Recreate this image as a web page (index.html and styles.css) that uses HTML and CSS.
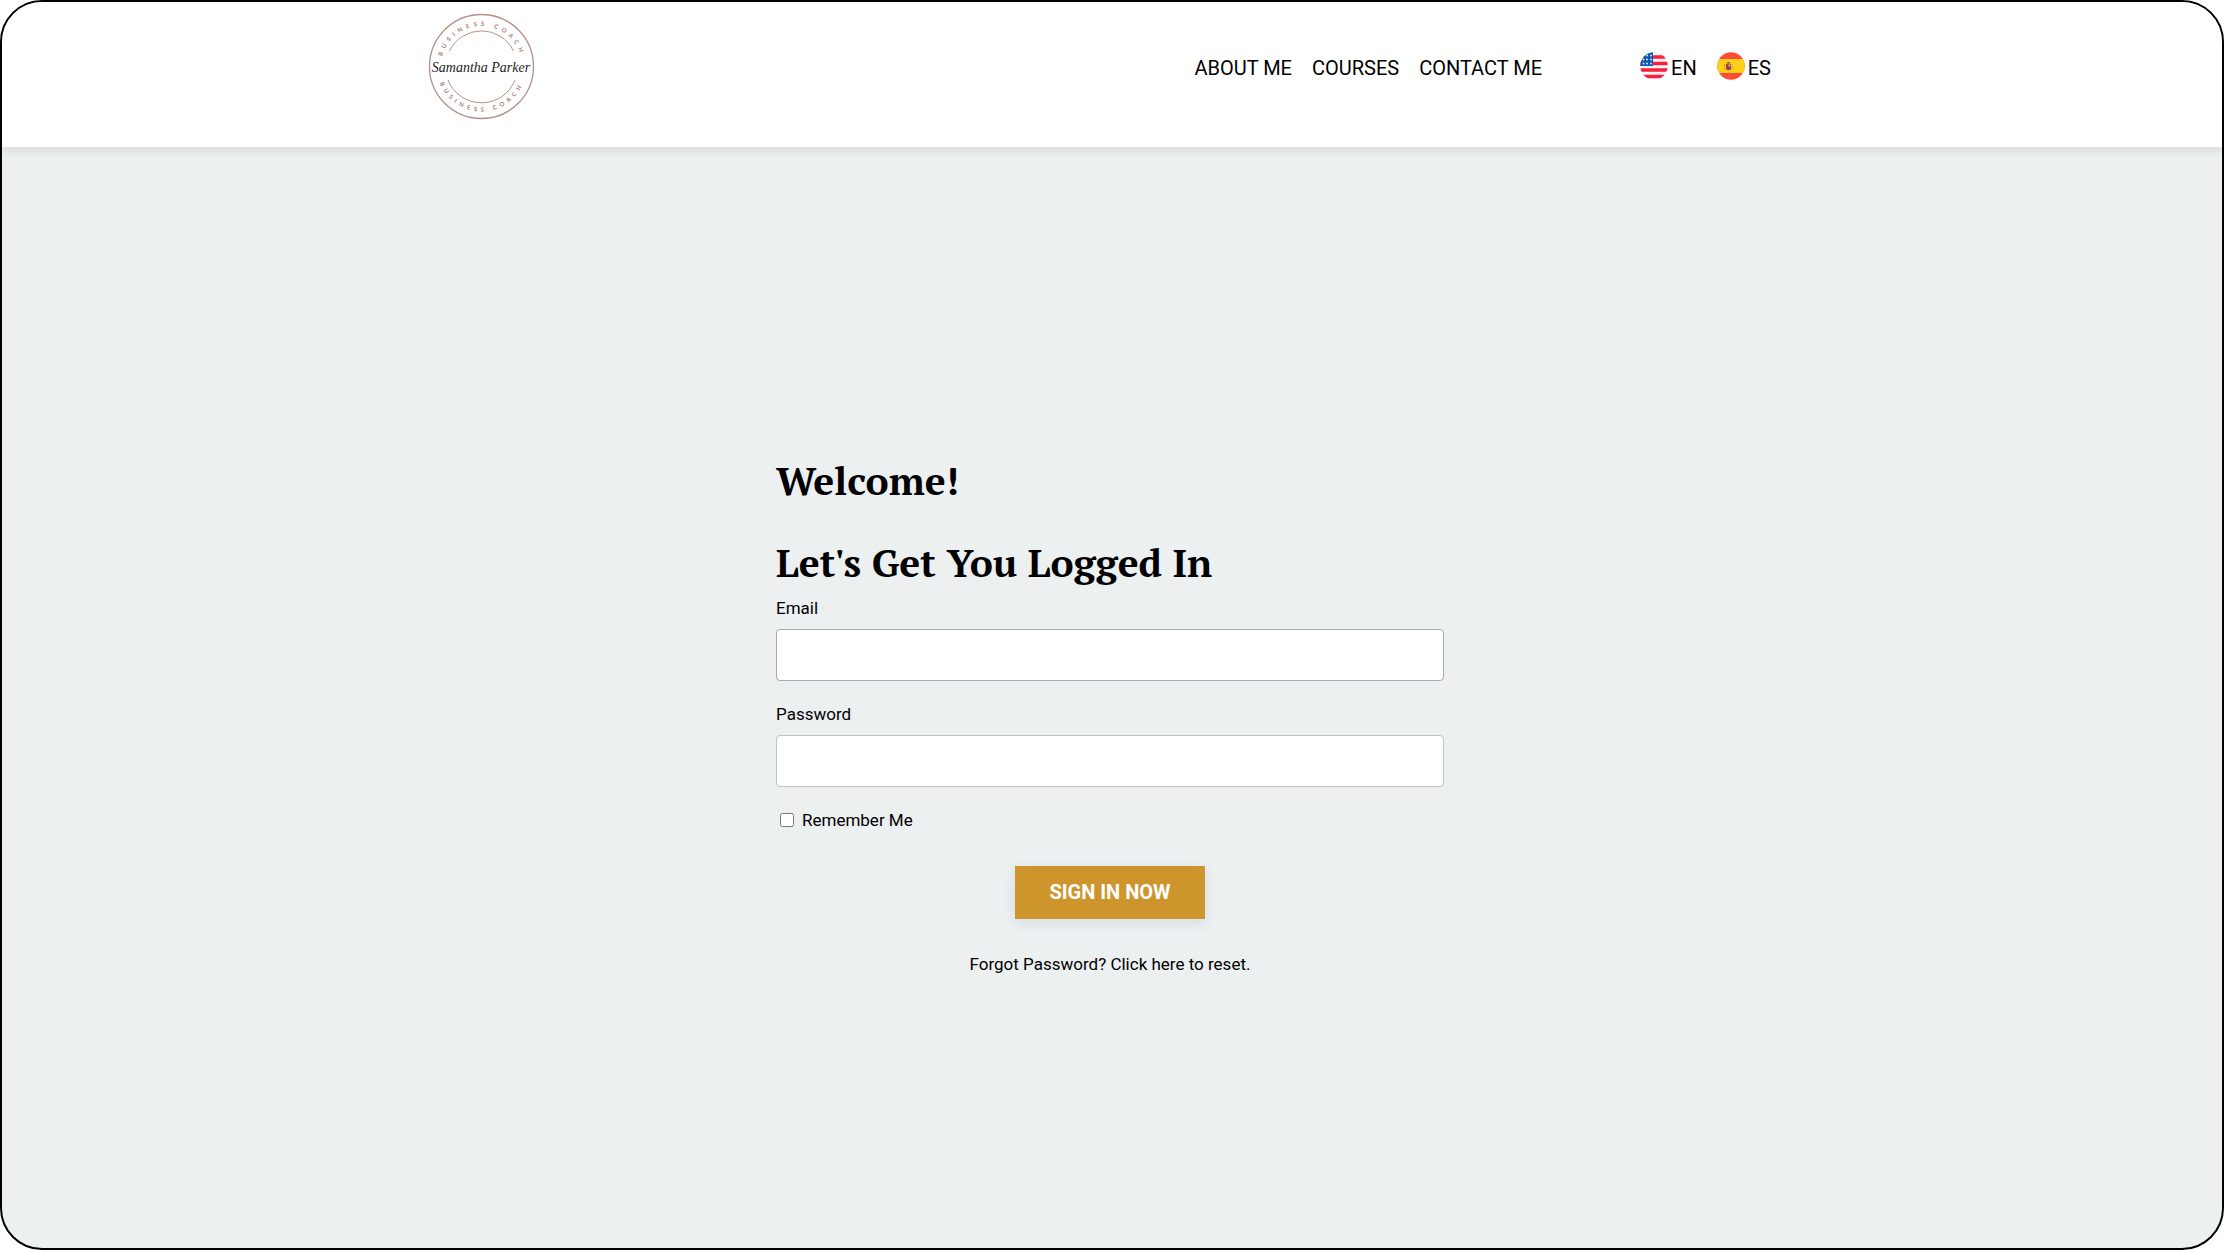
FILE: index.html
```html
<!DOCTYPE html>
<html lang="en">
<head>
    <meta charset="UTF-8">
    <meta name="viewport" content="width=device-width, initial-scale=1.0">
    <title>Samantha Parker - Login</title>
    <link rel="stylesheet" href="styles.css">
</head>
<body>
    <div class="page">
        <header class="header">
            <div class="header-content">
                <a href="#" class="logo" aria-label="Samantha Parker">
                    <svg width="108" height="108" viewBox="0 0 108 108">
                        <defs>
                            <path id="arcTop" d="M14 54.500 A40.5 40.5 0 0 1 95 54.500" />
                            <path id="arcBottom" d="M9.500 54.500 A45 45 0 0 0 99.500 54.500" />
                        </defs>
                        <g fill="none" stroke="#b58f89">
                            <circle cx="54.500" cy="54.500" r="52" stroke-width="1.3" />
                            <path d="M22.500 39 A35.500 35.500 0 0 1 86.500 39" />
                            <path d="M21 68 A36 36 0 0 0 88 68" />
                        </g>
                        <g class="logo-ring">
                            <text><textPath href="#arcTop" startOffset="50%" text-anchor="middle">BUSINESS COACH</textPath></text>
                            <text><textPath href="#arcBottom" startOffset="50%" text-anchor="middle">BUSINESS COACH</textPath></text>
                        </g>
                        <text class="logo-name" x="54" y="60" text-anchor="middle">Samantha Parker</text>
                    </svg>
                </a>
                <nav class="nav">
                    <a href="#">ABOUT ME</a>
                    <a href="#">COURSES</a>
                    <a href="#">CONTACT ME</a>
                </nav>
                <div class="languages">
                    <a href="#">
                        <svg width="28" height="28" viewBox="0 0 28 28">
                            <clipPath id="round"><circle cx="14" cy="14" r="13.7" /></clipPath>
                            <g clip-path="url(#round)">
                                <rect width="28" height="28" fill="#f5f3f6" />
                                <path d="M0 5h28M0 11.500h28M0 18h28M0 24.500h28" stroke="#fb1f3a" stroke-width="3.4" />
                                <rect width="13" height="14" fill="#0d56b0" />
                                <g fill="#d5e4f5">
                                    <circle cx="7" cy="3.500" r="1" /><circle cx="11" cy="3.500" r="1" />
                                    <circle cx="3.500" cy="7.500" r="1" /><circle cx="7" cy="7.500" r="1" /><circle cx="11" cy="7.500" r="1" />
                                    <circle cx="3.500" cy="11.500" r="1" /><circle cx="7" cy="11.500" r="1" /><circle cx="11" cy="11.500" r="1" />
                                </g>
                            </g>
                        </svg>
                        <span>EN</span>
                    </a>
                    <a href="#">
                        <svg width="28" height="28" viewBox="0 0 28 28">
                            <g clip-path="url(#round)">
                                <rect width="28" height="28" fill="#ff4b3a" />
                                <rect y="7" width="28" height="14" fill="#ffd018" />
                                <path d="M7.500 12v6M15 12v6" stroke="#c99b50" stroke-width="1" />
                                <path d="M9 12h5v4c0 3-5 3-5 0z" fill="#b13a28" />
                                <path d="M9.500 11.500c0-2 4-2 4 0z" fill="#8d4a25" />
                                <path d="M11.500 12.500h2v2h-2z" fill="#d8c3b0" />
                                <path d="M12 15h1.500v2h-1.500z" fill="#5a5470" />
                            </g>
                        </svg>
                        <span>ES</span>
                    </a>
                </div>
            </div>
        </header>

        <main class="main">
            <form class="login-form">
                <h1>Welcome!</h1>
                <h1>Let's Get You Logged In</h1>
                <div class="form-group">
                    <label for="email">Email</label>
                    <input type="email" id="email" class="form-input form-input-email">
                </div>
                <div class="form-group">
                    <label for="password">Password</label>
                    <input type="password" id="password" class="form-input">
                </div>
                <div class="remember">
                    <input type="checkbox" id="remember">
                    <label for="remember">Remember Me</label>
                </div>
                <button type="submit" class="sign-in">SIGN IN NOW</button>
                <a href="#" class="forgot">Forgot Password? Click here to reset.</a>
            </form>
        </main>
    </div>
</body>
</html>
```
FILE: styles.css
```css
* {
    margin: 0;
    padding: 0;
    box-sizing: border-box;
}
body {
    background: #fff;
    color: #000;
    font-family: Roboto, sans-serif;
    font-size: 17px;
    line-height: 26px;
}
a {
    color: inherit;
    text-decoration: none;
}
.page {
    min-height: 100vh;
    display: flex;
    flex-direction: column;
    background: #ecf0f1;
    border: 2px solid #000;
    border-radius: 42px;
    overflow: hidden;
}

/* Header */
.header {
    background: #fff;
    padding: 10px 24px 27px;
    box-shadow: 0 2px 10px rgba(0, 0, 0, 0.12);
}
.header-content {
    max-width: 1370px;
    margin: 0 auto;
    padding-right: 26px;
    display: flex;
    align-items: center;
}
.logo {
    margin-right: auto;
}
.logo svg {
    display: block;
}
.logo-ring {
    fill: #a87d76;
    font-family: Lato, sans-serif;
    font-size: 6px;
    font-weight: 700;
    letter-spacing: 4px;
}
.logo-name {
    fill: #222;
    font-family: "Liberation Serif", serif;
    font-size: 14px;
    font-style: italic;
}
.nav,
.languages {
    display: flex;
    gap: 20px;
    font-size: 20px;
    line-height: 28px;
}
.nav {
    padding-top: 3px;
}
.languages {
    margin-left: 98px;
}
.languages a {
    display: flex;
    align-items: center;
    gap: 3px;
}
.languages span {
    padding-top: 3px;
}

/* Login */
.main {
    flex: 1;
    display: flex;
    justify-content: center;
    align-items: center;
    padding: 37px 28px 0 24px;
}
.login-form {
    width: 668px;
    display: flex;
    flex-direction: column;
}
h1 {
    font-family: "PT Serif", "Liberation Serif", serif;
    font-size: 39px;
    line-height: 50px;
    margin-bottom: 32px;
}
h1 + h1 {
    margin-bottom: 8px;
}
.form-group {
    display: flex;
    flex-direction: column;
    gap: 8px;
    margin-bottom: 20px;
}
.form-input {
    width: 100%;
    height: 52px;
    padding: 12px;
    background: #fff;
    border: 1px solid #c0c3c4;
    border-radius: 4px;
    font: inherit;
}
.form-input-email {
    border-color: #aaa;
}
.remember {
    display: flex;
    align-items: center;
    gap: 8px;
    padding-left: 4px;
    margin-bottom: 33px;
}
.remember input {
    width: 14px;
    height: 14px;
}
.sign-in {
    align-self: center;
    padding: 13px 34px;
    background: #cf952d;
    color: #fff;
    border: none;
    font: inherit;
    font-size: 20px;
    font-weight: 700;
    line-height: 27px;
    cursor: pointer;
    box-shadow: 0 4px 12px rgba(50, 50, 93, 0.1);
}
.forgot {
    align-self: center;
    margin-top: 32px;
}

@media (max-width: 768px) {
    .header-content {
        flex-direction: column;
        gap: 16px;
        padding-right: 0;
    }
    .logo {
        margin-right: 0;
    }
    .languages {
        margin-left: 0;
    }
}
```
